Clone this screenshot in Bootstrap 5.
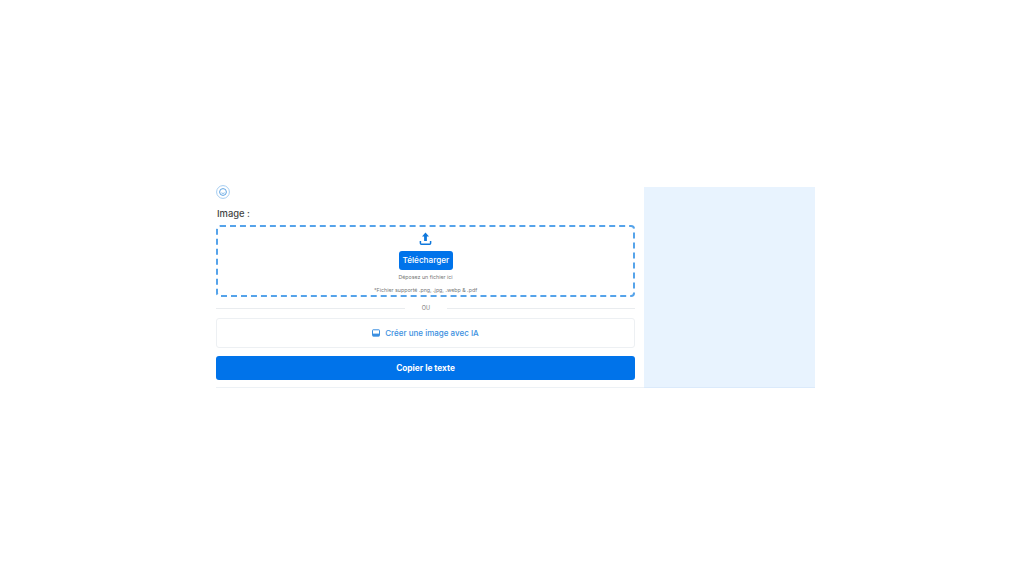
<!DOCTYPE html>
<html lang="fr">
<head>
  <meta charset="UTF-8">
  <title>Image</title>
  <link href="https://cdn.jsdelivr.net/npm/bootstrap@5.3.0/dist/css/bootstrap.min.css" rel="stylesheet">
  <style>
    body { font-family: Inter, "Liberation Sans", sans-serif; background: #fff; }
    .ecran { height: 576px; padding-left: 216px; padding-top: 187px; }
    .bloc { width: 599px; height: 201px; border-bottom: 1px solid #edf1f5; }
    .gauche { width: 419px; }
    .apercu { width: 171px; margin-left: 9px; height: 201px; background: #e8f3fe; border-bottom: 1px solid #dbeafb; }
    .logo-rond { width: 14px; height: 14px; display: block; margin-top: -2px; }
    .titre-champ { font-size: 9.4px; font-weight: 500; color: #444; line-height: 12px; margin-top: 9px; margin-bottom: 5px; margin-left: 1px; }
    .zone-depot { height: 72px; border: 2px dashed #55a3ea; border-radius: 4px; padding-top: 5px; }
    .zone-depot svg { width: 13px; height: 13px; display: block; }
    .btn-telecharger { background: #0073ea; color: #fff; font-size: 8.2px; font-weight: 500; line-height: 12px; padding: 2px 4px 4px; width: 54px; height: 19px; border-radius: 3px; border: 0; margin-top: 6px; }
    .petit-texte { font-size: 5.3px; line-height: 7px; color: #777; margin-top: 4px; }
    .petit-texte + .petit-texte { margin-top: 6px; }
    .separateur { height: 1px; background: #e9ecef; margin-top: 10px; margin-bottom: 10px; position: relative; top: 1px; }
    .separateur span { position: absolute; left: 189px; top: -4px; width: 42px; background: #fff; text-align: center; font-size: 5.5px; line-height: 8px; color: #777; }
    .btn-ia { height: 30px; border: 1px solid #edf0f3; border-radius: 3px; background: #fff; color: #3b8fe0; font-size: 8px; font-weight: 500; width: 100%; }
    .btn-ia svg { width: 8px; height: 8px; margin-right: 5px; }
    .btn-copier { height: 24px; margin-top: 8px; background: #0073ea; color: #fff; border: 0; border-radius: 3px; font-size: 8.3px; font-weight: 700; width: 100%; padding: 0; }
  </style>
</head>
<body class="m-0">
  <div class="ecran">
    <div class="bloc d-flex">
      <div class="gauche">
        <svg class="logo-rond" viewBox="0 0 14 14" fill="none">
          <circle cx="7" cy="7" r="6.4" stroke="#a6cdf1" stroke-width="1"/>
          <circle cx="7" cy="7" r="3.4" stroke="#5fa4e3" stroke-width="1"/>
          <path d="M5.4 7.8c.9.8 2.3.8 3.2 0" stroke="#5fa4e3" stroke-width=".8"/>
        </svg>
        <div class="titre-champ">Image :</div>
        <div class="zone-depot d-flex flex-column align-items-center">
          <svg viewBox="0 0 13 13" fill="none">
            <path d="M6.5 .6 10 4.6H7.9V9H5.1V4.6H3z" fill="#0f78dc"/>
            <path d="M1.4 9v2.2c0 .6.4 1 1 1h8.2c.6 0 1-.4 1-1V9" stroke="#0f78dc" stroke-width="1.5"/>
          </svg>
          <button type="button" class="btn btn-telecharger">Télécharger</button>
          <div class="petit-texte">Déposez un fichier ici</div>
          <div class="petit-texte">*Fichier supporté .png, .jpg, .webp &amp; .pdf</div>
        </div>
        <div class="separateur"><span>OU</span></div>
        <button type="button" class="btn btn-ia d-flex align-items-center justify-content-center p-0">
          <svg viewBox="0 0 8 8" fill="none">
            <rect x=".5" y=".8" width="7" height="6.4" rx=".6" stroke="#3b8fe0"/>
            <rect x="1" y="4.6" width="6" height="2.4" fill="#3b8fe0"/>
          </svg>
          Créer une image avec IA
        </button>
        <button type="button" class="btn btn-copier">Copier le texte</button>
      </div>
      <div class="apercu"></div>
    </div>
  </div>
  <script src="https://cdn.jsdelivr.net/npm/bootstrap@5.3.0/dist/js/bootstrap.bundle.min.js"></script>
</body>
</html>
